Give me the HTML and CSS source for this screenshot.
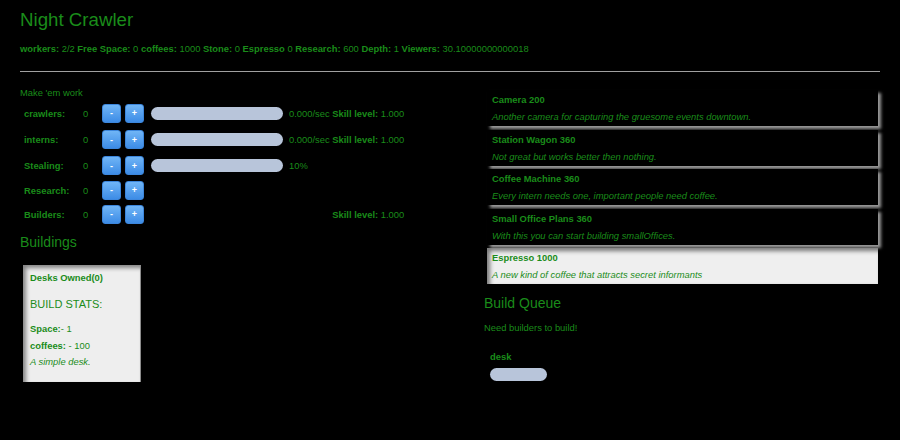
FILE: index.html
```html
<!DOCTYPE html>
<html lang="en">

<head>
    <meta charset="UTF-8">
    <meta name="viewport" content="width=device-width, initial-scale=1.0">
    <link rel="stylesheet" href="styles.css">
    <title>Night Crawler</title>
</head>

<body>
    <div class="game">
        <header class="top">
            <h1 class="title">Night Crawler</h1>
            <p class="stats">
                <b>workers:</b> 2/2 <b>Free Space:</b> 0 <b>coffees:</b> 1000 <b>Stone:</b> 0 <b>Espresso</b> 0
                <b>Research:</b> 600 <b>Depth:</b> 1 <b>Viewers:</b> 30.10000000000018
            </p>
        </header>
        <hr class="rule">

        <div class="columns">
            <section class="left">
                <p class="intro">Make 'em work</p>
                <div class="workers">
                    <div class="row">
                        <span class="name">crawlers:</span>
                        <span class="count">0</span>
                        <span class="btns"><button class="btn">-</button><button class="btn">+</button></span>
                        <span class="bar"></span>
                        <span class="info">0.000/sec <b>Skill level:</b> 1.000</span>
                    </div>
                    <div class="row">
                        <span class="name">interns:</span>
                        <span class="count">0</span>
                        <span class="btns"><button class="btn">-</button><button class="btn">+</button></span>
                        <span class="bar"></span>
                        <span class="info">0.000/sec <b>Skill level:</b> 1.000</span>
                    </div>
                    <div class="row">
                        <span class="name">Stealing:</span>
                        <span class="count">0</span>
                        <span class="btns"><button class="btn">-</button><button class="btn">+</button></span>
                        <span class="bar"></span>
                        <span class="info">10%</span>
                    </div>
                    <div class="row">
                        <span class="name">Research:</span>
                        <span class="count">0</span>
                        <span class="btns"><button class="btn">-</button><button class="btn">+</button></span>
                    </div>
                    <div class="row">
                        <span class="name">Builders:</span>
                        <span class="count">0</span>
                        <span class="btns"><button class="btn">-</button><button class="btn">+</button></span>
                        <span class="info info-right"><b>Skill level:</b> 1.000</span>
                    </div>
                </div>

                <h2 class="heading">Buildings</h2>
                <div class="building">
                    <p class="owned">Desks Owned(0)</p>
                    <h3 class="buildStats">BUILD STATS:</h3>
                    <p class="line first"><b>Space:</b>- 1</p>
                    <p class="line"><b>coffees:</b> - 100</p>
                    <p class="line desc">A simple desk.</p>
                </div>
            </section>

            <section class="right">
                <div class="upgrade">
                    <p class="upName">Camera 200</p>
                    <p class="upDesc">Another camera for capturing the gruesome events downtown.</p>
                </div>
                <div class="upgrade">
                    <p class="upName">Station Wagon 360</p>
                    <p class="upDesc">Not great but works better then nothing.</p>
                </div>
                <div class="upgrade">
                    <p class="upName">Coffee Machine 360</p>
                    <p class="upDesc">Every intern needs one, important people need coffee.</p>
                </div>
                <div class="upgrade">
                    <p class="upName">Small Office Plans 360</p>
                    <p class="upDesc">With this you can start building smallOffices.</p>
                </div>
                <div class="upgrade available">
                    <p class="upName">Espresso 1000</p>
                    <p class="upDesc">A new kind of coffee that attracts secret informants</p>
                </div>

                <h2 class="heading queueHeading">Build Queue</h2>
                <p class="note">Need builders to build!</p>
                <div class="queueItem">
                    <p class="queueName">desk</p>
                    <div class="queueBar"></div>
                </div>
            </section>
        </div>
    </div>
</body>

</html>
```

FILE: styles.css
```css
body {
    margin: 0;
    background-color: #000;
    color: #1a8c1a;
    font-family: "Liberation Sans", Arial, sans-serif;
    font-size: 9.4px;
}

p {
    margin: 0;
}

.game {
    padding: 0 20px;
}

.title {
    margin: 0;
    padding-top: 9px;
    font-size: 18.7px;
    line-height: 22px;
    font-weight: normal;
}

.stats {
    margin-top: 12px;
    line-height: 12px;
}

.rule {
    margin: 16px 0 0;
    border: 0;
    border-top: 1px solid #a0a0a0;
}

.columns {
    display: grid;
    grid-template-columns: 464px 396px;
    margin-top: 15px;
}

.intro {
    line-height: 11px;
}

.workers {
    display: grid;
    grid-template-columns: 59px 19px 49px 138px max-content;
    grid-template-rows: 26px 27px 25px 24px 24px;
    align-items: center;
    margin-top: 2px;
    padding-left: 4px;
}

.row {
    display: contents;
}

.name {
    grid-column: 1;
    font-weight: bold;
}

.btns {
    display: flex;
    gap: 4px;
}

.btn {
    width: 19px;
    height: 19px;
    padding: 0;
    border: 1px solid #3c86dc;
    border-radius: 3px;
    background: linear-gradient(#70b5f6, #3d8ce6);
    color: #fff;
    font-family: "Liberation Sans", Arial, sans-serif;
    font-size: 9px;
    font-weight: bold;
}

.bar {
    grid-column: 4;
    width: 132px;
    height: 13px;
    border-radius: 7px;
    background-color: #b8c5da;
}

.info {
    grid-column: 5;
}

.info-right {
    justify-self: end;
}

.heading {
    margin: 8px 0 0;
    font-size: 14px;
    line-height: 16px;
    font-weight: normal;
}

.building {
    width: 110px;
    height: 110px;
    margin: 15px 0 0 3px;
    padding: 7px 0 0 7px;
    background-color: #eeeeee;
    box-shadow: inset 3px 3px 4px rgba(0, 0, 0, 0.45);
    border-right: 1px solid #8c8c8c;
}

.owned {
    font-weight: bold;
    line-height: 11px;
}

.buildStats {
    margin: 15px 0 0;
    font-size: 11px;
    line-height: 13px;
    font-weight: normal;
}

.line {
    line-height: 16.5px;
}

.line.first {
    margin-top: 10px;
}

.desc {
    font-style: italic;
}

.right {
    padding-top: 3px;
}

.upgrade {
    width: 386px;
    height: 32px;
    margin-left: 3px;
    margin-bottom: 3.5px;
    padding: 4px 0 0 5px;
    background-color: #000;
    box-shadow: 3px 3px 3px #9a9a9a;
}

.upgrade.available {
    background-color: #efefef;
    box-shadow: inset 3px 3px 4px rgba(0, 0, 0, 0.5);
}

.upName {
    font-weight: bold;
    line-height: 11px;
}

.upDesc {
    margin-top: 6px;
    line-height: 11px;
    font-style: italic;
}

.queueHeading {
    margin-top: 11px;
}

.note {
    margin-top: 11px;
    line-height: 11px;
}

.queueItem {
    margin-top: 18px;
    padding-left: 6px;
}

.queueName {
    font-weight: bold;
    line-height: 11px;
}

.queueBar {
    width: 57px;
    height: 13px;
    margin-top: 6px;
    border-radius: 7px;
    background-color: #b8c5da;
}
```
